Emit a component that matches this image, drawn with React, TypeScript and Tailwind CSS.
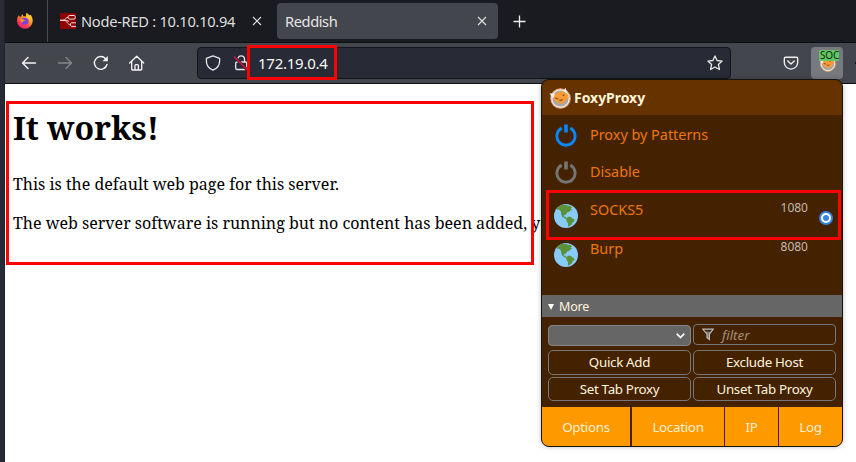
import React from "react";

const ui = "font-['Noto_Sans','Open_Sans',sans-serif]";

function Firefox() {
  return (
    <svg width="18" height="18" viewBox="0 0 18 18" className="block">
      <defs>
        <linearGradient id="flame" x1=".85" y1="0" x2=".2" y2="1">
          <stop offset="0" stopColor="#fff14a" />
          <stop offset=".4" stopColor="#ff9a26" />
          <stop offset=".7" stopColor="#ff3f4d" />
          <stop offset="1" stopColor="#e5158b" />
        </linearGradient>
      </defs>
      <path d="M2.7 3.2 4 5l1.3-.5L6 2l1.6 2.2 2.2.2L10.5.7c1.2.6 2.1 1.6 2.7 2.8l.9-.9c1.8 1.7 2.7 3.8 2.6 6.6A7.9 7.9 0 0 1 9 16.7 7.9 7.9 0 0 1 1 9c0-2.3.5-4.3 1.7-5.8Z" fill="url(#flame)" />
      <path d="M5.2 7.2c1.5-1.8 5.8-2 7.1.5 1 2.2-.2 4.8-3 5.1-2.6.2-4.4-1.6-4-3.5l3.3-.8-.8-1.2Z" fill="#8143dd" />
      <path d="M4.3 7.3c1.3-.5 2.2-.2 3 .6l1.8.1-1.9 1.5c-.6 1-1.6.7-2.2.7Z" fill="#ff9b25" />
      <path d="M9.6 4.7c2.7.2 4.1 2.4 3.6 4.7 1-1.4 1-3.3.1-4.7Z" fill="#ffd438" />
    </svg>
  );
}

function NodeRed() {
  return (
    <svg width="16" height="16" viewBox="0 0 16 16" className="block shrink-0" fill="none" stroke="#eee0df">
      <rect width="16" height="16" rx=".8" fill="#8f0000" stroke="none" />
      <rect x="8.2" y="2.5" width="7" height="3.6" rx="1.2" />
      <path d="M0 7.3h3c3 0 2.2-3 5-3M3 7.3c4.7 0 3.8 4.5 7.8 4.5M0 7.3h4c2.4 0 4 .8 5 1" />
      <path d="M16 9.8h-4.3c-1 0-1.2.5-1.2 1.2v1.2c0 .8.4 1.2 1.2 1.2H16" />
    </svg>
  );
}

function Close() {
  return (
    <svg width="10" height="10" viewBox="0 0 10 10" className="block shrink-0" stroke="#e2e2e3" strokeWidth="1.1">
      <path d="m1 1 8 8M9 1 1 9" />
    </svg>
  );
}

function Arrow({ right = false }: { right?: boolean }) {
  return (
    <svg width="16" height="16" viewBox="0 0 16 16" className={right ? "block rotate-180 text-[#86878b]" : "block text-[#f5f5f6]"} fill="none" stroke="currentColor" strokeWidth="1.35" strokeLinecap="round" strokeLinejoin="round">
      <path d="M14.5 8h-13M7 2.5 1.5 8 7 13.5" />
    </svg>
  );
}

function Fox({ size }: { size: number }) {
  return (
    <svg width={size} height={size} viewBox="0 0 21 21" className="block shrink-0">
      <circle cx="11" cy="11" r="9.3" fill="#aaa6a2" stroke="#e8a06a" strokeWidth="1" />
      <circle cx="11" cy="11" r="8.3" fill="none" stroke="#f2eee9" strokeWidth="1.2" />
      <path d="m4.8 7.2 4.2-2.4 5.4-.8 3.2 2.4 1.2 3.8-3.7 3.4-2.4 2.4-4.6-1-3.6-3.2Z" fill="#f99a35" />
      <path d="m.5 6 5 .5-.6 3-1.6 1.1Z" fill="#f5f2ee" />
      <path d="m13.8 4 1.9-3.3 1.9 5.8-1.6-1Z" fill="#f5f2ee" />
      <path d="m6 10.4 2.9 1M13 8.3l1.9-1M9.9 12.5l2 .4.9-1.5" stroke="#804a25" strokeWidth="1" fill="none" />
    </svg>
  );
}

function Power({ className }: { className: string }) {
  return (
    <svg width="22" height="23" viewBox="0 0 22 23" className={`block ${className}`} fill="none" stroke="currentColor">
      <path d="M6.7 4.1a9.1 9.1 0 1 0 8.6 0" strokeWidth="2.9" />
      <path d="M11 .4v8.2" strokeWidth="3.6" />
    </svg>
  );
}

function Globe() {
  return (
    <svg width="24" height="24" viewBox="0 0 24 24" className="block">
      <circle cx="12" cy="12" r="12" fill="#8acbff" />
      <path d="M3.2 4.2C5.2 1.9 7 1 9.2.4l1.8.8 2-.6.7 1.7 2.1-.7 2.3 1.8-1.5.8 1.8 1.8-2.4.6-.6 1.3-2.3.7-1.2 1.8-2.2 1.2.2 1.2 1.7-.4.6 1.6 1.8.9-1.1.6-2.4-1.2-2.2-1.6-1.1-2.6-.2-2.4-1.4-1.7-2.6-.4Z" fill="#5b9239" />
      <path d="m13 13.6 2.1-1.2 2.2.8 1 1.2 2.2.9-.4 2-1.8 1.4-.6 1.9-1.5.8-1 1.2-1.3-.3.1-3.1-1.4-2-.3-2Z" fill="#5b9239" />
    </svg>
  );
}

const actionButton = "flex items-center justify-center rounded-[5px] border border-[#777] pt-px text-[13.33px] leading-none tracking-[-0.3px] text-[#fff4df]";
const footerItem = "flex items-center justify-center bg-[#ff9900] pt-[2px] text-[13.33px] tracking-[-0.28px] text-[#ffefcf]";

export default function App() {
  return (
    <div className={`relative flex h-[462px] w-[856px] overflow-hidden bg-white ${ui}`}>
      <div className="w-[5px] shrink-0 border-r border-[#20222b] bg-[#282a36]" />
      <div className="flex min-w-0 flex-1 flex-col">
        <header className="flex h-[43px] shrink-0 border-b border-[#0d0e12] bg-[#1a1b20]">
          <div className="flex w-[43px] items-center justify-end border-r border-[#4b4d53] pr-[13px]"><Firefox /></div>
          <div className="flex w-[229px] items-center pl-3 pr-[15px]">
            <NodeRed />
            <span className="ml-[5px] flex-1 whitespace-nowrap text-[14.67px] tracking-[-0.28px] text-[#dededf]">Node-RED : 10.10.10.94</span>
            <Close />
          </div>
          <div className="mt-[3px] flex h-9 w-[221px] items-center rounded-[4px] bg-[#44464d] pl-2 pr-[11px]">
            <span className="flex-1 text-[14.67px] tracking-[-0.42px] text-[#e5e5e7]">Reddish</span><Close />
          </div>
          <div className="ml-[15px] flex items-center">
            <svg width="13" height="13" viewBox="0 0 13 13" stroke="#eeeeef" strokeWidth="1.3"><path d="M6.5.5v12M.5 6.5h12" /></svg>
          </div>
        </header>

        <nav className="flex h-[41px] shrink-0 items-center overflow-hidden border-b border-[#0d0e12] bg-[#44464d] pl-4">
          <div className="flex shrink-0 gap-5">
            <Arrow /><Arrow right />
            <svg width="16" height="16" viewBox="0 0 16 16" fill="none" stroke="#f5f5f6" strokeWidth="1.4" strokeLinecap="round">
              <path d="M14 9.5A6.4 6.4 0 1 1 12.6 3.7" /><path d="M14.8 1v5.3H9.5Z" fill="#f5f5f6" stroke="none" />
            </svg>
            <svg width="16" height="16" viewBox="0 0 16 16" fill="none" stroke="#f5f5f6" strokeWidth="1.3" strokeLinecap="round" strokeLinejoin="round">
              <path d="m.7 8 7-6.8 7 6.8M2.7 6.5v7.8c0 .4.3.7.7.7H12c.4 0 .7-.3.7-.7V6.5M6 14.6v-4c0-.7.4-1 1-1h1.4c.6 0 1 .3 1 1v4" />
            </svg>
          </div>
          <div className="ml-[52px] flex h-8 w-[534px] shrink-0 items-center rounded-[4px] border border-[#14151c] bg-[#282a36] pl-[7px] pr-[7px]">
            <svg width="16" height="16" viewBox="0 0 16 16" fill="none" stroke="#e7e7e8" strokeWidth="1.3" strokeLinejoin="round"><path d="m8 .9 6.6 2.5v2.8c0 4-2.4 7.1-6.6 9-4.2-1.9-6.6-5-6.6-9V3.4Z" /></svg>
            <svg width="16" height="16" viewBox="0 0 16 16" className="ml-3" fill="none" stroke="#e7e7e8" strokeWidth="1.3">
              <path d="M4.7 7V4.3a3.4 3.4 0 0 1 6.8 0V7" /><rect x="2.7" y="7" width="11" height="7.5" rx="1.3" /><path d="m1 1.5 13.5 13.7" stroke="#282a36" strokeWidth="3" /><path d="m1 1.5 13.5 13.7" stroke="#e1103f" />
            </svg>
            <span className="ml-[9px] flex-1 text-[15px] tracking-[-0.25px] text-[#f8f8f8]">172.19.0.4</span>
            <svg width="16" height="16" viewBox="0 0 16 16" fill="none" stroke="#e7e7e8" strokeWidth="1.3" strokeLinejoin="round"><path d="m8 .9 2.1 4.6 5 .6-3.7 3.4 1 5L8 12l-4.4 2.5 1-5L.9 6.1l5-.6Z" /></svg>
          </div>
          <svg width="16" height="16" viewBox="0 0 16 16" className="ml-[52px] shrink-0" fill="none" stroke="#f0f0f1" strokeWidth="1.35" strokeLinecap="round" strokeLinejoin="round"><path d="M2.5 2.2h11c.7 0 1.2.5 1.2 1.2v4a6.7 6.7 0 0 1-13.4 0v-4c0-.7.5-1.2 1.2-1.2Z" /><path d="m4.8 6 3.2 3 3.2-3" /></svg>
          <div className="relative ml-3 flex h-8 w-8 shrink-0 items-center justify-center rounded-[4px] bg-[#77797e]">
            <Fox size={17} />
            <span className="absolute left-2 top-[3px] h-[11px] w-5 rounded-[1px] bg-[#63c765] pl-px text-[10px] leading-[11px] tracking-[-0.2px] text-[#102b10]">SOC</span>
          </div>
          <span className="ml-3 h-[2px] w-[2px] shrink-0 bg-[#101116]" />
        </nav>

        <main className="flex-1 overflow-hidden whitespace-nowrap bg-white pl-2 font-['Noto_Serif','DejaVu_Serif_Condensed','DejaVu_Serif',serif] text-black">
          <h1 className="mt-[21px] text-[32px] font-bold leading-[46px]">It works!</h1>
          <p className="mt-[22px] text-[16px] leading-[23px]">This is the default web page for this server.</p>
          <p className="mt-4 text-[16px] leading-[23px]">The web server software is running but no content has been added, yet.</p>
        </main>
      </div>

      <div className="absolute left-[6px] top-[101px] h-[164px] w-[528px] border-[3px] border-[#f00]" />
      <div className="absolute left-[247px] top-[45px] h-[35px] w-[90px] border-[3px] border-[#f00]" />

      <section className="absolute left-[541px] top-[79px] flex h-[368px] w-[302px] flex-col overflow-hidden rounded-[8px] border border-[#17130f] bg-[#442200] shadow-[0_0_5px_rgba(0,0,0,0.25)]">
        <div className="flex h-[35px] shrink-0 items-center bg-[#663300] pl-[7px]">
          <Fox size={22} /><b className="ml-[3px] text-[14px] tracking-[-0.04px] text-[#fff4d8]">FoxyProxy</b>
        </div>
        <div className="h-[180px] shrink-0 text-[14.4px] text-[#ed7708]">
          <div className="flex h-[38px] items-center pl-[13px]"><Power className="mt-[3px] text-[#0788ff]" /><span className="ml-[13px] mt-px">Proxy by Patterns</span></div>
          <div className="flex h-[38px] items-center pl-[13px]"><Power className="text-[#747474]" /><span className="-mt-px ml-[13px]">Disable</span></div>
          <div className="flex h-[39px] pl-3 pr-[9px]">
            <div className="pt-[13px]"><Globe /></div><span className="ml-3 flex-1 leading-[37px]">SOCKS5</span><span className="text-[12px] leading-[34px] text-[#c3b9ae]">1080</span>
            <div className="ml-[11px] mt-5 flex h-[14px] w-[14px] items-center justify-center rounded-full border-2 border-[#3584e4] bg-white"><div className="h-[6px] w-[6px] rounded-full bg-[#3584e4]" /></div>
          </div>
          <div className="flex h-[39px] pl-3 pr-[34px]"><div className="pt-[13px]"><Globe /></div><span className="ml-3 flex-1 leading-[37px]">Burp</span><span className="text-[12px] leading-[34px] text-[#c3b9ae]">8080</span></div>
        </div>
        <div className="flex h-[22px] shrink-0 items-center bg-[#666] pl-[6px] pt-[2px] text-[12.5px] tracking-[-0.2px] text-[#fff4df]"><svg width="6" height="6" viewBox="0 0 6 6"><path d="M0 0h6L3 6Z" fill="#fff" /></svg><span className="ml-[5px]">More</span></div>
        <div className="flex h-[90px] shrink-0 flex-col px-[6px] pt-[7px]">
          <div className="grid grid-cols-2 gap-x-[2px]">
            <div className="mt-px flex h-[21px] items-center justify-end rounded-[4px] border border-[#858585] bg-[#666] pr-[5px]"><svg width="9" height="6" viewBox="0 0 9 6" fill="none" stroke="white" strokeWidth="1.7"><path d="m.7.7 3.8 3.8L8.3.7" /></svg></div>
            <div className="flex h-[21px] items-center rounded-[4px] border border-[#777] pl-2 text-[13.3px] italic text-[#a69079]">
              <svg width="12" height="13" viewBox="0 0 12 13"><path d="M.8 1h10.4L7.4 6.2v5.4L5 9.8V6.2Z" fill="#777" stroke="#bbb" strokeWidth="1.2" /><path d="M2.4 2h7.2L8.5 3.4h-5Z" fill="#442200" /></svg><span className="ml-2 mt-[2px]">filter</span>
            </div>
          </div>
          <div className="mt-1 grid grid-cols-2 gap-x-[2px] gap-y-[2px]">
            <button className={`h-[25px] ${actionButton}`}>Quick Add</button><button className={`h-[25px] ${actionButton}`}>Exclude Host</button>
            <button className={`h-6 ${actionButton}`}>Set Tab Proxy</button><button className={`h-6 ${actionButton}`}>Unset Tab Proxy</button>
          </div>
        </div>
        <div className="flex flex-1 bg-[#442200]">
          <div className={`w-[88px] ${footerItem}`}>Options</div><div className={`ml-[2px] w-[92px] ${footerItem}`}>Location</div><div className={`ml-px w-[53px] ${footerItem}`}>IP</div><div className={`ml-px w-[63px] ${footerItem}`}>Log</div>
        </div>
      </section>
      <div className="absolute left-[546px] top-[190px] h-[50px] w-[295px] border-[3px] border-[#f00]" />
    </div>
  );
}
